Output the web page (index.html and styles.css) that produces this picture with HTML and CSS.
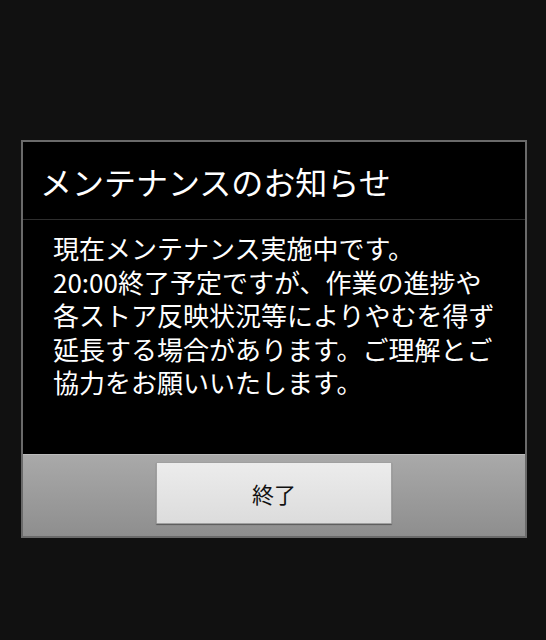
FILE: index.html
```html
<!DOCTYPE html>
<html lang="ja">
<head>
<meta charset="utf-8">
<link rel="stylesheet" href="styles.css">
</head>
<body>
<div class="dialog">
  <div class="title">メンテナンスのお知らせ</div>
  <div class="message">現在メンテナンス実施中です。<br>20:00終了予定ですが、作業の進捗や<br>各ストア反映状況等によりやむを得ず<br>延長する場合があります。ご理解とご<br>協力をお願いいたします。</div>
  <div class="footer">
    <button class="btn">終了</button>
  </div>
</div>
</body>
</html>
```
FILE: styles.css
```css
html, body {
  margin: 0;
  padding: 0;
}
body {
  width: 546px;
  height: 640px;
  background: #111111;
  font-family: "Noto Sans CJK JP", "Noto Sans", sans-serif;
  overflow: hidden;
}
.dialog {
  margin: 140px 0 0 21px;
  width: 502px;
  border: 2px solid #6a6a6a;
  background: #000;
}
.title {
  height: 78px;
  box-sizing: border-box;
  border-bottom: 1px solid #2e2e2e;
  display: flex;
  align-items: center;
  padding-left: 17px;
  color: #fff;
  font-size: 32px;
  line-height: 1;
}
.message {
  padding: 11px 0 55px 30px;
  color: #fff;
  font-size: 26px;
  line-height: 33.5px;
  white-space: nowrap;
}
.footer {
  height: 82px;
  box-sizing: border-box;
  border-top: 1px solid #bcbcbc;
  background: linear-gradient(#a9a9a9, #8e8e8e);
  display: flex;
  justify-content: center;
  align-items: flex-start;
  padding-top: 7px;
}
.btn {
  width: 236px;
  height: 62px;
  box-sizing: border-box;
  border: 1px solid #a0a0a0;
  border-radius: 1px;
  background: linear-gradient(#ececec, #dcdcdc);
  box-shadow: 0 1px 1px #5a5a5a;
  color: #111;
  font-family: "Noto Sans CJK JP", "Noto Sans", sans-serif;
  font-size: 22px;
  padding: 0;
}
```
